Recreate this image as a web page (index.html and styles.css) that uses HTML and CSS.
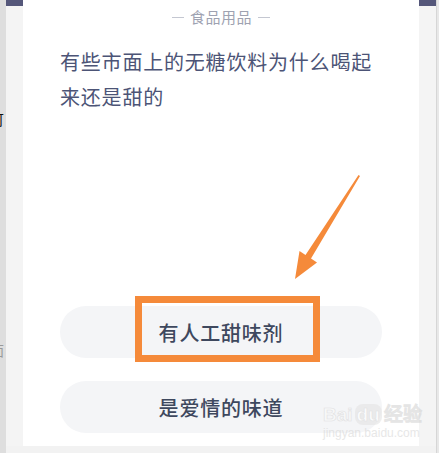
FILE: index.html
```html
<!DOCTYPE html>
<html lang="zh-CN">
<head>
    <meta charset="UTF-8">
    <title>食品用品</title>
    <link rel="stylesheet" href="styles.css">
</head>
<body>
    <div class="page">
        <div class="edge-left">
            <span class="peek peek-top">可</span>
            <span class="peek peek-low">面</span>
        </div>
        <div class="frame">
            <div class="gutter"><div class="gutter-bar"></div></div>
            <div class="card">
                <div class="category">
                    <span class="dash"></span>
                    <span>食品用品</span>
                    <span class="dash"></span>
                </div>
                <div class="question">有些市面上的无糖饮料为什么喝起来还是甜的</div>

                <div class="options">
                    <div class="option">
                        有人工甜味剂
                        <div class="highlight"></div>
                    </div>
                    <div class="option">是爱情的味道</div>
                </div>

                <svg class="arrow" width="80" height="120" viewBox="280 170 80 120">
                    <polygon fill="#f58a3a" points="295,279 299.5,251 305.5,255 358.5,175 360,176 311,258.5 317,262.5"/>
                </svg>

                <div class="watermark">
                    <div class="wm-logo">Bai<span class="wm-du">du</span>经验</div>
                    <div class="wm-url">jingyan.baidu.com</div>
                </div>
            </div>
            <div class="gutter"><div class="gutter-bar"></div></div>
        </div>
        <div class="edge-right"></div>
    </div>
</body>
</html>
```

FILE: styles.css
```css
body {
    margin: 0;
    padding: 0;
    background-color: #f2f2f2;
    font-family: "Noto Sans CJK SC", "Noto Sans", sans-serif;
    overflow: hidden;
}

.page {
    display: flex;
    width: 439px;
    height: 453px;
}

.edge-left {
    position: relative;
    width: 6px;
    background-color: #dedede;
    overflow: hidden;
}

.peek {
    position: absolute;
    left: -10px;
    font-size: 14px;
    line-height: 14px;
}

.peek-top {
    top: 112px;
    color: #111;
}

.peek-low {
    top: 343px;
    color: #999;
}

.frame {
    display: grid;
    grid-template-columns: 17px 396px 17px;
    height: 446px;
    background-color: #f4f4f4;
}

.gutter-bar {
    height: 6px;
    background-color: #55577a;
}

.edge-right {
    width: 2px;
    background-color: #e8e8e8;
    border-left: 1px solid #d6d6d6;
}

/* question card */

.card {
    position: relative;
    display: flex;
    flex-direction: column;
    background-color: #fff;
    padding: 0 37px 13px 37px;
}

.category {
    display: flex;
    justify-content: center;
    align-items: center;
    gap: 6px;
    margin-top: 7px;
    font-size: 15px;
    line-height: 20px;
    color: #9ea2b1;
    letter-spacing: 0.5px;
}

.dash {
    width: 12px;
    height: 1px;
    background-color: #c4c7d1;
}

.question {
    margin-top: 17px;
    font-size: 20px;
    line-height: 35px;
    letter-spacing: 0.8px;
    color: #4c5476;
}

.options {
    display: flex;
    flex-direction: column;
    gap: 23px;
    margin-top: auto;
}

.option {
    position: relative;
    height: 52px;
    border-radius: 26px;
    background-color: #f4f5f7;
    display: flex;
    justify-content: center;
    align-items: center;
    font-size: 20px;
    font-weight: 500;
    letter-spacing: 0.8px;
    color: #3e485e;
}

.highlight {
    position: absolute;
    left: 75px;
    top: -10px;
    width: 171px;
    height: 52px;
    border: 7px solid #f58a3a;
}

.arrow {
    position: absolute;
    left: 257px;
    top: 170px;
}

.watermark {
    position: absolute;
    left: 300px;
    top: 404px;
    white-space: nowrap;
    font-family: "Liberation Sans", sans-serif;
    opacity: 0.6;
}

.wm-logo {
    font-size: 19px;
    font-weight: bold;
    line-height: 22px;
    -webkit-text-stroke: 0.6px #d4d4d4;
    color: #fafafa;
}

.wm-du {
    margin: 0 2px;
    padding: 0 2px;
    border-radius: 8px;
    background-color: #e4e4e4;
    color: #fff;
}

.wm-url {
    font-size: 12px;
    line-height: 14px;
    color: #d8d8d8;
}
```
